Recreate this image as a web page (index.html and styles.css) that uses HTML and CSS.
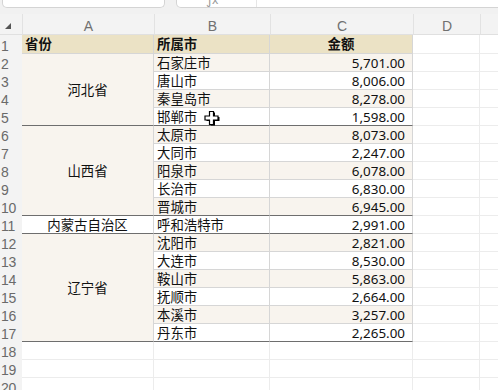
FILE: index.html
```html
<!DOCTYPE html>
<html lang="zh">
<head>
<meta charset="utf-8">
<link rel="stylesheet" href="styles.css">
</head>
<body>
<div class="toolbar">
  <div class="box box-name"></div>
  <div class="box box-formula"><span class="fx">ƒx</span><span class="divider"></span></div>
</div>
<div class="sheet">
  <div class="corner"><svg width="6" height="6" viewBox="0 0 6 6"><polygon points="6,0 6,6 0,6" fill="#555"/></svg></div>
  <div class="colh">A</div><div class="colh">B</div><div class="colh">C</div><div class="colh">D</div><div class="colh last"></div>

  <div class="rowh">1</div>
  <div class="c head">省份</div><div class="c head">所属市</div><div class="c head center">金额</div><div class="c e"></div><div class="c e last"></div>

  <div class="rowh">2</div>
  <div class="c prov beige dark" style="grid-row: span 4">河北省</div>
  <div class="c beige">石家庄市</div><div class="c beige num">5,701.00</div><div class="c e"></div><div class="c e last"></div>
  <div class="rowh">3</div>
  <div class="c">唐山市</div><div class="c num">8,006.00</div><div class="c e"></div><div class="c e last"></div>
  <div class="rowh">4</div>
  <div class="c beige">秦皇岛市</div><div class="c beige num">8,278.00</div><div class="c e"></div><div class="c e last"></div>
  <div class="rowh">5</div>
  <div class="c dark">邯郸市</div><div class="c num dark">1,598.00</div><div class="c e"></div><div class="c e last"></div>

  <div class="rowh">6</div>
  <div class="c prov beige dark" style="grid-row: span 5">山西省</div>
  <div class="c beige">太原市</div><div class="c beige num">8,073.00</div><div class="c e"></div><div class="c e last"></div>
  <div class="rowh">7</div>
  <div class="c">大同市</div><div class="c num">2,247.00</div><div class="c e"></div><div class="c e last"></div>
  <div class="rowh">8</div>
  <div class="c beige">阳泉市</div><div class="c beige num">6,078.00</div><div class="c e"></div><div class="c e last"></div>
  <div class="rowh">9</div>
  <div class="c">长治市</div><div class="c num">6,830.00</div><div class="c e"></div><div class="c e last"></div>
  <div class="rowh">10</div>
  <div class="c beige dark">晋城市</div><div class="c beige num dark">6,945.00</div><div class="c e"></div><div class="c e last"></div>

  <div class="rowh">11</div>
  <div class="c prov dark">内蒙古自治区</div>
  <div class="c dark">呼和浩特市</div><div class="c num dark">2,991.00</div><div class="c e"></div><div class="c e last"></div>

  <div class="rowh">12</div>
  <div class="c prov beige dark" style="grid-row: span 6">辽宁省</div>
  <div class="c beige">沈阳市</div><div class="c beige num">2,821.00</div><div class="c e"></div><div class="c e last"></div>
  <div class="rowh">13</div>
  <div class="c">大连市</div><div class="c num">8,530.00</div><div class="c e"></div><div class="c e last"></div>
  <div class="rowh">14</div>
  <div class="c beige">鞍山市</div><div class="c beige num">5,863.00</div><div class="c e"></div><div class="c e last"></div>
  <div class="rowh">15</div>
  <div class="c">抚顺市</div><div class="c num">2,664.00</div><div class="c e"></div><div class="c e last"></div>
  <div class="rowh">16</div>
  <div class="c beige">本溪市</div><div class="c beige num">3,257.00</div><div class="c e"></div><div class="c e last"></div>
  <div class="rowh">17</div>
  <div class="c dark">丹东市</div><div class="c num dark">2,265.00</div><div class="c e"></div><div class="c e last"></div>

  <div class="rowh">18</div>
  <div class="c e"></div><div class="c e"></div><div class="c e"></div><div class="c e"></div><div class="c e last"></div>
  <div class="rowh">19</div>
  <div class="c e"></div><div class="c e"></div><div class="c e"></div><div class="c e"></div><div class="c e last"></div>
  <div class="rowh">20</div>
  <div class="c e"></div><div class="c e"></div><div class="c e"></div><div class="c e"></div><div class="c e last"></div>

  <svg class="cursor" width="16" height="16" viewBox="0 0 16 16">
    <path d="M6 1.5h4v4.5h4.5v4h-4.5v4.5h-4v-4.5h-4.5v-4h4.5z" fill="#000" transform="translate(1,1)"/>
    <path d="M5.5 1.5h4v4.5h4.5v4h-4.5v4.5h-4v-4.5h-4.5v-4h4.5z" fill="#fff" stroke="#000" stroke-width="1.2"/>
  </svg>
</div>
</body>
</html>
```

FILE: styles.css
```css
* { box-sizing: border-box; }
html, body {
  margin: 0;
  padding: 0;
  width: 498px;
  height: 390px;
  overflow: hidden;
  background: #fff;
  font-family: "Noto Sans", "Noto Sans CJK SC", sans-serif;
}
.toolbar {
  height: 14px;
  background: #f1f1f1;
  display: flex;
  align-items: flex-start;
  padding-left: 2px;
  gap: 11px;
}
.box {
  height: 8px;
  background: #fff;
  border: 1px solid #d4d4d4;
  border-top: none;
  border-radius: 0 0 5px 5px;
  position: relative;
}
.box-name { width: 163px; }
.box-formula { flex: 1; margin-right: -8px; }
.fx {
  position: absolute;
  left: 30px;
  top: -9px;
  font-size: 12px;
  color: #999;
}
.divider {
  position: absolute;
  left: 79px;
  top: 0;
  width: 1px;
  height: 7px;
  background: #e6e6e6;
}
.sheet {
  position: relative;
  display: grid;
  grid-template-columns: 22px 132px 116px 143px 67px 1fr;
  grid-template-rows: 21px 19px repeat(19, 18px);
}
.corner {
  background: #f3f3f3;
  border-bottom: 1px solid #e0e0e0;
  display: flex;
  align-items: center;
  padding-left: 5px;
  padding-top: 4px;
}
.colh {
  background: #f3f3f3;
  border-left: 1px solid #e2e2e2;
  border-bottom: 1px solid #e0e0e0;
  color: #707070;
  font-family: "Liberation Sans", "Noto Sans", sans-serif;
  font-size: 14px;
  display: flex;
  align-items: center;
  justify-content: center;
  padding-top: 4px;
}
.rowh {
  background: #f3f3f3;
  color: #6a6a6a;
  font-family: "Liberation Sans", "Noto Sans", sans-serif;
  font-size: 14px;
  display: flex;
  align-items: center;
  padding-left: 1px;
  padding-top: 3px;
  letter-spacing: -0.3px;
  border-bottom: 1px solid #f3f3f3;
}
.c {
  border-right: 1px solid #d6d6d6;
  border-bottom: 1px solid #d6d6d6;
  font-size: 13.4px;
  color: #111;
  display: flex;
  align-items: center;
  padding: 2px 3px 0;
  white-space: nowrap;
  line-height: 1;
}
.c.e {
  border-right-color: #ececec;
  border-bottom-color: #ececec;
}
.c.last { border-right: none; }
.head {
  background: #ebe2c5;
  font-weight: bold;
}
.center { justify-content: center; }
.prov { justify-content: center; }
.beige { background: #f8f4ee; }
.num {
  justify-content: flex-end;
  padding-right: 7px;
}
.c.dark { border-bottom-color: #6e6e6e; }
.cursor {
  position: absolute;
  left: 204px;
  top: 96px;
}
```
